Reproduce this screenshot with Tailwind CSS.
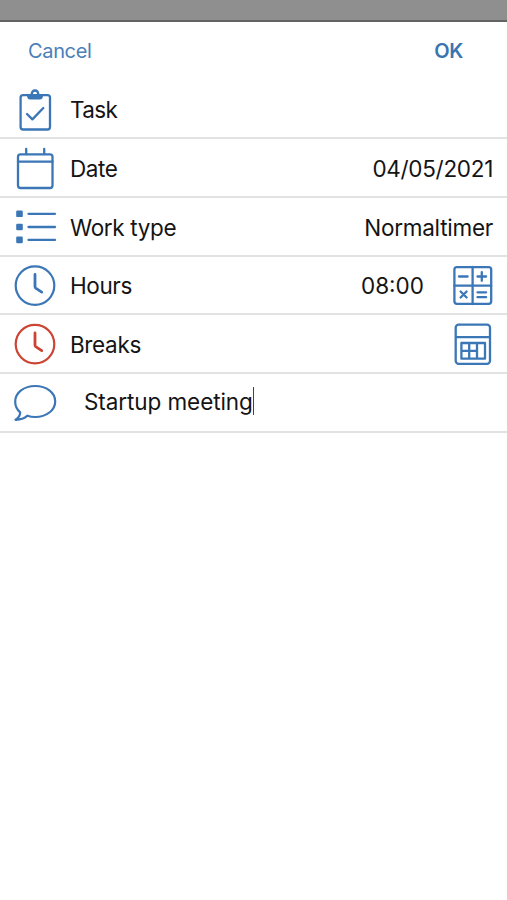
<!DOCTYPE html>
<html lang="en">
<head>
<meta charset="utf-8">
<meta name="viewport" content="width=device-width, initial-scale=1">
<title>Time entry</title>
<script src="https://cdn.jsdelivr.net/npm/@tailwindcss/browser@4"></script>
</head>
<body class="min-h-screen bg-white font-['Inter',sans-serif] text-[22.5px] text-[#141414]">
<div class="h-[22px] border-b-2 border-[#636363] bg-[#8f8f8f]"></div>
<header class="flex h-[58px] items-center justify-between pr-[44px] pl-[28px] text-[20px] text-[#4a7fb8]">
  <button class="tracking-[-0.35px]">Cancel</button>
  <button class="font-semibold tracking-[-0.3px] text-[#3a75b0]">OK</button>
</header>
<main>
  <div class="flex h-[59px] items-center border-b-2 border-[#e2e2e2]">
    <svg class="h-[57px] w-[70px] shrink-0" viewBox="0 80 70 57" fill="none" stroke="#3b77b7" stroke-width="2.3" stroke-linecap="round" stroke-linejoin="round"><rect x="20.6" y="95.1" width="29.4" height="34.4" rx="2.5"/><path d="M28.5 95.2v1.6q0 1.6 1.6 1.6h9.8q1.6 0 1.6-1.6v-1.6M31.6 95q.2-4.5 3.4-4.5t3.4 4.5"/><path d="M29 96.6h12" stroke-width="3"/><path d="M27 114l5.4 5.4L43.3 108"/></svg>
    <span class="grow pt-[3px] tracking-[-0.6px]">Task</span>
  </div>
  <div class="flex h-[59px] items-center border-b-2 border-[#e2e2e2] pr-[14px]">
    <svg class="h-[57px] w-[70px] shrink-0" viewBox="0 139 70 57" fill="none" stroke="#3b77b7" stroke-width="2.3" stroke-linecap="round"><rect x="18" y="154.3" width="34.5" height="33.7" rx="2.5"/><path d="M18 161.7h34.5M26.2 149v5M44.2 149v5"/></svg>
    <span class="grow pt-[2px] tracking-[-0.4px]">Date</span>
    <span class="pt-[2px] tracking-[-0.3px]">04/05/2021</span>
  </div>
  <div class="flex h-[59px] items-center border-b-2 border-[#e2e2e2] pr-[14px]">
    <svg class="h-[57px] w-[70px] shrink-0" viewBox="0 198 70 57" fill="#3b77b7" stroke="#3b77b7" stroke-linecap="round"><path d="M28.5 213.8H55M28.5 227H55M28.5 239.9H55" stroke-width="2.3"/><g stroke="none"><rect x="16.2" y="210.5" width="6.6" height="6.6" rx="1.2"/><rect x="16.2" y="223.7" width="6.6" height="6.6" rx="1.2"/><rect x="16.2" y="236.6" width="6.6" height="6.6" rx="1.2"/></g></svg>
    <span class="grow pt-[2px] tracking-[-0.35px]">Work type</span>
    <span class="pt-[2px] tracking-[-0.25px]">Normaltimer</span>
  </div>
  <div class="flex h-[58px] items-center border-b-2 border-[#e2e2e2]">
    <svg class="h-[56px] w-[70px] shrink-0" viewBox="0 257 70 56" fill="none" stroke="#3b77b7" stroke-linecap="round" stroke-linejoin="round"><circle cx="35" cy="285.6" r="19.3" stroke-width="2.2"/><path d="M35 274.5v12.3q0 .8.7 1.3l6 4" stroke-width="2.8"/></svg>
    <span class="grow pt-[2px] tracking-[-0.4px]">Hours</span>
    <span class="pt-[2px] tracking-[0px]">08:00</span>
    <svg class="h-[56px] w-[83px] shrink-0" viewBox="424 257 83 56" fill="none" stroke="#3b77b7" stroke-width="2.3" stroke-linecap="round"><rect x="454.4" y="267.2" width="36.8" height="36.6" rx="2.5"/><path d="M472.6 267v37M454.4 285.6h36.8M459 276.5h8.6M477.5 276.5h8.6M481.8 272.2v8.6M460.6 291.5l6 6M466.6 291.5l-6 6M477.5 292.3h8.6M477.5 297.2h8.6"/></svg>
  </div>
  <div class="flex h-[59px] items-center border-b-2 border-[#e2e2e2]">
    <svg class="h-[57px] w-[70px] shrink-0" viewBox="0 315 70 57" fill="none" stroke="#cc4434" stroke-linecap="round" stroke-linejoin="round"><circle cx="35" cy="344.1" r="19.3" stroke-width="2.2"/><path d="M35 333v12.3q0 .8.7 1.3l6 4" stroke-width="2.8"/></svg>
    <span class="grow pt-[2px] tracking-[-0.35px]">Breaks</span>
    <svg class="h-[57px] w-[83px] shrink-0" viewBox="424 315 83 57" fill="none" stroke="#3b77b7" stroke-width="2.3" stroke-linejoin="round"><rect x="455.7" y="324.6" width="34.3" height="39.2" rx="3"/><path d="M455.7 337.2H490"/><path d="M461.4 343h23.6v15.7h-23.6zM469.2 343v15.7M477 343v15.7M461.4 350.8H477"/></svg>
  </div>
  <div class="flex h-[59px] items-center border-b-2 border-[#e2e2e2]">
    <svg class="h-[57px] w-[84px] shrink-0" viewBox="0 374 84 57" fill="none" stroke="#3b77b7" stroke-width="2.2" stroke-linejoin="round"><path d="M20.2 412.4C17 409.6 15.2 405.8 15.2 401.7C15.2 392.6 24 386 35.2 386S55.2 392.6 55.2 401.4S46.4 417 35.2 417Q31 417 27.5 415.7Q22.5 420 15.5 419.8Q20 417.2 20.2 412.4Z"/></svg>
    <span class="pb-px tracking-[-0.08px]">Startup meeting</span>
    <span class="mb-[3px] h-[28px] w-[1.5px] bg-[#444]"></span>
  </div>
</main>
</body>
</html>
